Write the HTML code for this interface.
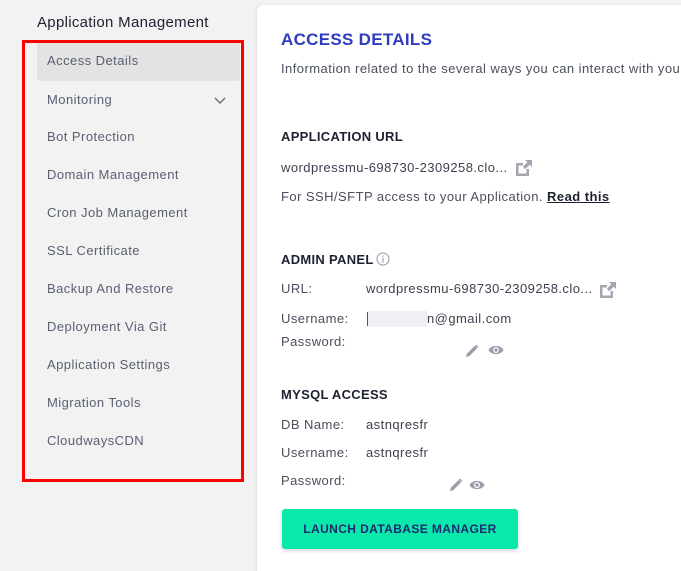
<!DOCTYPE html>
<html style="width:681px;height:571px;overflow:hidden"><head><meta charset="utf-8">
<style>
*{margin:0;padding:0;box-sizing:border-box}
body{width:681px;height:571px;overflow:hidden;background:#f2f2f2;font-family:"Liberation Sans",sans-serif;position:relative;color:#4a4f5c;letter-spacing:0.45px}
.a{position:absolute;white-space:nowrap}
.nav{font-size:13px;color:#5a6072;left:47px}
.panel{position:absolute;left:257px;top:5px;width:440px;height:580px;background:#fff;border-radius:6px;box-shadow:-2px 0 4px rgba(0,0,0,0.05)}
.h{font-size:13px;font-weight:bold;color:#1d2130;letter-spacing:0.3px}
.t{font-size:13px;color:#4a4f5c}
.v{font-size:13px;color:#3e4250}
</style></head><body>
<div class="a" style="left:37px;top:14px;font-size:15px;color:#1d2130;letter-spacing:0.3px">Application Management</div>
<div class="a" style="left:37px;top:41px;width:203px;height:40px;background:#e3e3e3;border-radius:3px"></div>
<div class="a" style="left:22px;top:40px;width:222px;height:442px;border:3px solid #f00"></div>
<div class="a nav" style="top:53px">Access Details</div>
<div class="a nav" style="top:92px">Monitoring</div>
<svg class="a" style="left:213px;top:96px" width="14" height="9" viewBox="0 0 14 9"><path d="M2 2l5 5 5-5" fill="none" stroke="#7a7f8c" stroke-width="1.6"/></svg>
<div class="a nav" style="top:129px">Bot Protection</div>
<div class="a nav" style="top:167px">Domain Management</div>
<div class="a nav" style="top:205px">Cron Job Management</div>
<div class="a nav" style="top:243px">SSL Certificate</div>
<div class="a nav" style="top:281px">Backup And Restore</div>
<div class="a nav" style="top:319px">Deployment Via Git</div>
<div class="a nav" style="top:357px">Application Settings</div>
<div class="a nav" style="top:395px">Migration Tools</div>
<div class="a nav" style="top:433px">CloudwaysCDN</div>

<div class="panel"></div>
<div class="a" style="left:281px;top:30px;font-size:17px;font-weight:bold;color:#2f3bbf;letter-spacing:0.3px">ACCESS DETAILS</div>
<div class="a t" style="left:281px;top:61px">Information related to the several ways you can interact with your</div>
<div class="a h" style="left:281px;top:129px">APPLICATION URL</div>
<div class="a v" style="left:281px;top:160px">wordpressmu-698730-2309258.clo...</div>
<svg class="a" style="left:515px;top:159px" width="18" height="18" viewBox="0 0 18 18"><path d="M1 4h7v2.5H3.5v8h8V10H14v7H1z" fill="#a3a7b2"/><path d="M10 1h7v7l-2.3-2.3-4.5 4.5-2.4-2.4 4.5-4.5z" fill="#a3a7b2"/></svg>
<div class="a t" style="left:281px;top:189px">For SSH/SFTP access to your Application. <span style="color:#1d2130;font-weight:bold;text-decoration:underline">Read this</span></div>
<div class="a h" style="left:281px;top:252px">ADMIN PANEL</div>
<svg class="a" style="left:376px;top:252px" width="14" height="14" viewBox="0 0 14 14"><circle cx="7" cy="7" r="6" fill="none" stroke="#9a9ea8" stroke-width="1.1"/><rect x="6.4" y="6" width="1.2" height="4.5" fill="#9a9ea8"/><rect x="6.4" y="3.5" width="1.2" height="1.3" fill="#9a9ea8"/></svg>
<div class="a t" style="left:281px;top:281px">URL:</div>
<div class="a v" style="left:366px;top:281px">wordpressmu-698730-2309258.clo...</div>
<svg class="a" style="left:599px;top:281px" width="18" height="18" viewBox="0 0 18 18"><path d="M1 4h7v2.5H3.5v8h8V10H14v7H1z" fill="#a3a7b2"/><path d="M10 1h7v7l-2.3-2.3-4.5 4.5-2.4-2.4 4.5-4.5z" fill="#a3a7b2"/></svg>
<div class="a t" style="left:281px;top:311px">Username:</div>
<div class="a" style="left:367px;top:312px;width:1px;height:14px;background:#555"></div>
<div class="a" style="left:368px;top:311px;width:59px;height:16px;background:#eef0f3"></div>
<div class="a v" style="left:427px;top:311px">n@gmail.com</div>
<div class="a t" style="left:281px;top:334px">Password:</div>
<svg class="a" style="left:465px;top:344px" width="14" height="14" viewBox="0 0 14 14"><path d="M1 13l0.8-3.2 8-8 2.4 2.4-8 8z" fill="#9a9ea8"/><path d="M10.6 1l2.4 2.4" stroke="#9a9ea8" stroke-width="1.5"/></svg>
<svg class="a" style="left:488px;top:344px" width="16" height="12" viewBox="0 0 16 12"><path d="M0.5 6c2.5-5.5 12.5-5.5 15 0-2.5 5.5-12.5 5.5-15 0z" fill="#9a9ea8"/><circle cx="8" cy="6" r="3" fill="#fff"/><circle cx="8" cy="6" r="1.8" fill="#9a9ea8"/></svg>
<div class="a h" style="left:281px;top:387px">MYSQL ACCESS</div>
<div class="a t" style="left:281px;top:417px">DB Name:</div>
<div class="a v" style="left:366px;top:417px">astnqresfr</div>
<div class="a t" style="left:281px;top:445px">Username:</div>
<div class="a v" style="left:366px;top:445px">astnqresfr</div>
<div class="a t" style="left:281px;top:473px">Password:</div>
<svg class="a" style="left:449px;top:478px" width="14" height="14" viewBox="0 0 14 14"><path d="M1 13l0.8-3.2 8-8 2.4 2.4-8 8z" fill="#9a9ea8"/><path d="M10.6 1l2.4 2.4" stroke="#9a9ea8" stroke-width="1.5"/></svg>
<svg class="a" style="left:469px;top:479px" width="16" height="12" viewBox="0 0 16 12"><path d="M0.5 6c2.5-5.5 12.5-5.5 15 0-2.5 5.5-12.5 5.5-15 0z" fill="#9a9ea8"/><circle cx="8" cy="6" r="3" fill="#fff"/><circle cx="8" cy="6" r="1.8" fill="#9a9ea8"/></svg>
<div class="a" style="left:282px;top:509px;width:236px;height:40px;background:#0ae8ac;border-radius:3px;box-shadow:0 2px 4px rgba(0,0,0,0.15);font-size:12px;font-weight:bold;color:#1f2a6e;text-align:center;line-height:40px;letter-spacing:0.4px">LAUNCH DATABASE MANAGER</div>
</body></html>
